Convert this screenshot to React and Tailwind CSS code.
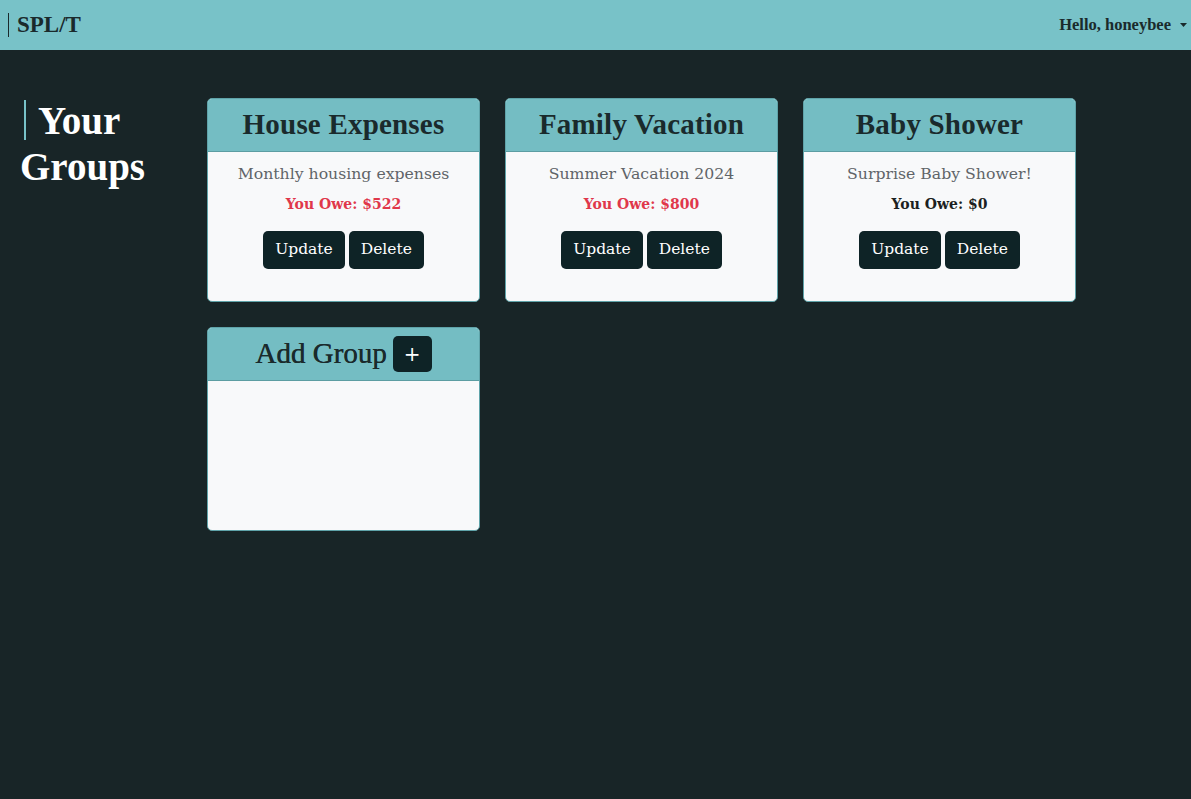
import React from "react";

const groups = [
  { name: "House Expenses", desc: "Monthly housing expenses", owe: "$522", red: true },
  { name: "Family Vacation", desc: "Summer Vacation 2024", owe: "$800", red: true },
  { name: "Baby Shower", desc: "Surprise Baby Shower!", owe: "$0", red: false },
];

const head = { fontFamily: '"Liberation Serif", "DejaVu Serif", serif' };
const body = { fontFamily: '"DejaVu Serif", "Liberation Serif", serif' };

function Card({ g }) {
  return (
    <div className="w-[273px] h-[204px] rounded-[5px] overflow-hidden border border-[#5fa3a9] bg-[#f8f9fa] flex flex-col">
      <div className="h-[53px] shrink-0 bg-[#74bdc3] border-b border-[#5c9da2] flex items-center justify-center">
        <span className="text-[29px] font-bold text-[#1a2a2c] tracking-[0.2px]" style={head}>{g.name}</span>
      </div>
      <div className="flex flex-col items-center pt-[10px]" style={body}>
        <div className="text-[15.7px] text-[#5f6468]">{g.desc}</div>
        <div className={`mt-[8px] text-[14px] font-bold ${g.red ? "text-[#e0374a]" : "text-[#1c1f21]"}`}>You Owe: {g.owe}</div>
        <div className="mt-[16px] flex gap-[4px]">
          <button className="h-[38px] px-[12px] rounded-[5px] bg-[#0e2326] text-white text-[15.5px]" style={body}>Update</button>
          <button className="h-[38px] px-[12px] rounded-[5px] bg-[#0e2326] text-white text-[15.5px]" style={body}>Delete</button>
        </div>
      </div>
    </div>
  );
}

export default function App() {
  return (
    <div className="min-h-[799px] bg-[#182527] flex flex-col">
      <nav className="h-[50px] bg-[#78c2c8] flex items-center justify-between pl-[8px] pr-[4px]">
        <div className="flex items-center">
          <div className="w-[1px] h-[24px] bg-[#1a2a2c] mr-[8px]" />
          <span className="text-[23px] font-bold text-[#1a2a2c]" style={head}>SPL/T</span>
        </div>
        <div className="flex items-center gap-[9px] text-[16.5px] font-bold text-[#1a2a2c]" style={head}>
          <span>Hello, honeybee</span>
          <svg width="7" height="5" viewBox="0 0 7 5"><path d="M0 0 L7 0 L3.5 4 Z" fill="#1a2a2c" /></svg>
        </div>
      </nav>
      <div className="flex pt-[48px]">
        <div className="w-[207px] shrink-0 pl-[20px]">
          <h1 className="text-[39px] leading-[46px] font-bold text-white" style={head}>
            <span className="inline-block w-[2px] h-[40px] bg-[#78c2c8] align-[-6px] ml-[4px] mr-[12px]" />Your
            <br />Groups
          </h1>
        </div>
        <div className="flex flex-col gap-[25px]">
          <div className="flex gap-[25px]">
            {groups.map((g) => <Card key={g.name} g={g} />)}
          </div>
          <div className="w-[273px] h-[204px] rounded-[5px] overflow-hidden border border-[#5fa3a9] bg-[#f8f9fa] flex flex-col">
            <div className="h-[53px] shrink-0 bg-[#74bdc3] border-b border-[#5c9da2] flex items-center justify-center gap-[6px]">
              <span className="text-[29px] text-[#1a2a2c] [text-shadow:0.4px_0_0_#1a2a2c]" style={head}>Add Group</span>
              <button className="w-[39px] h-[36px] rounded-[5px] bg-[#0e2326] text-white text-[20px] leading-none" style={body}>+</button>
            </div>
          </div>
        </div>
      </div>
    </div>
  );
}
